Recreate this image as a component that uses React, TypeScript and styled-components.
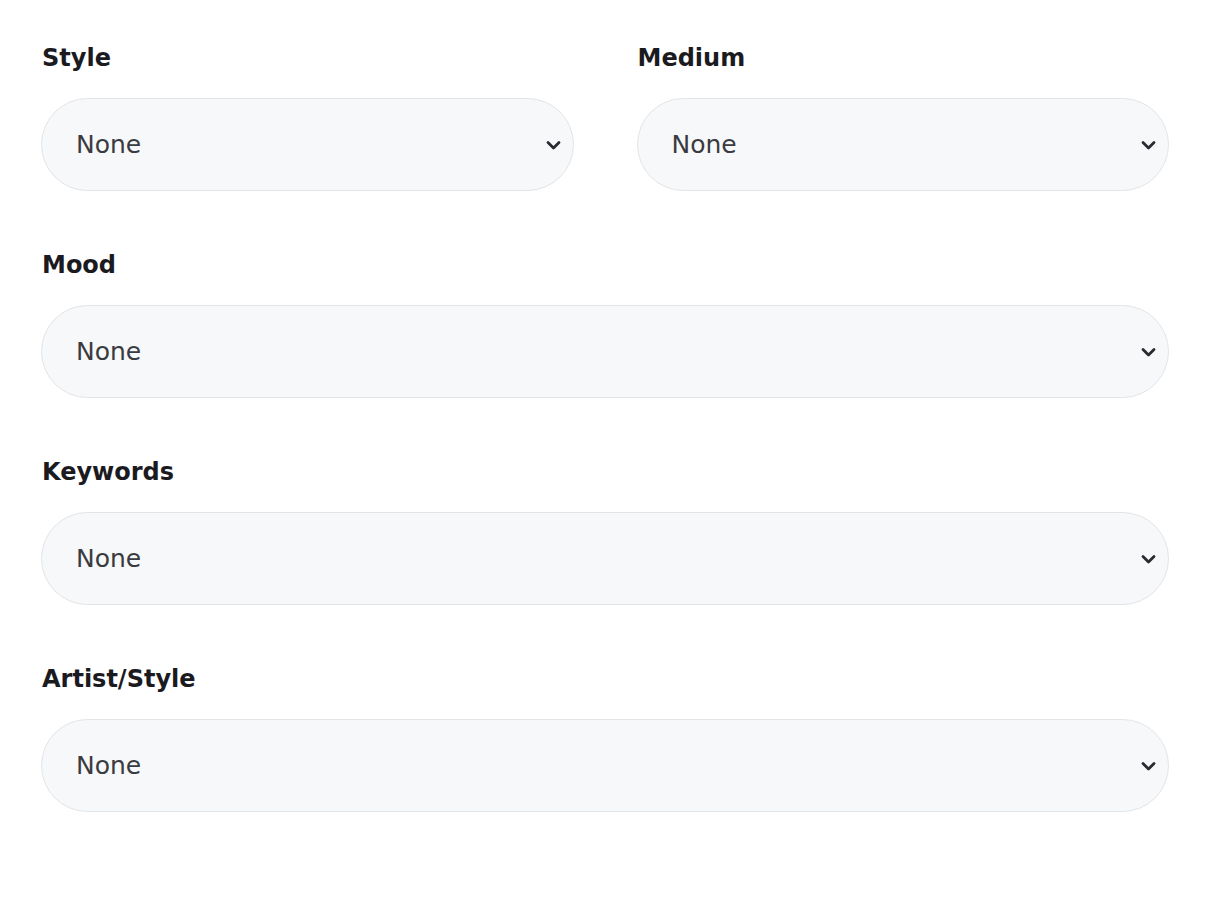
import { createGlobalStyle, styled } from "styled-components";

const GlobalStyle = createGlobalStyle`
  html, body {
    margin: 0;
    padding: 0;
    background: #ffffff;
  }
  body {
    font-family: "DejaVu Sans", "Liberation Sans", sans-serif;
  }
`;

const Form = styled.form`
  box-sizing: border-box;
  width: 1128px;
  margin-left: 41px;
  padding-top: 43px;
  display: flex;
  flex-direction: column;
  gap: 59px;
`;

const Row = styled.div`
  display: grid;
  grid-template-columns: 1fr 1fr;
  column-gap: 63px;
`;

const Field = styled.div`
  display: flex;
  flex-direction: column;
`;

const Label = styled.label`
  font-size: 24px;
  line-height: 30px;
  font-weight: bold;
  color: #1b1b1f;
  margin-bottom: 25px;
  padding-left: 1px;
`;

const SelectWrap = styled.div`
  position: relative;
`;

const Select = styled.select`
  appearance: none;
  -webkit-appearance: none;
  box-sizing: border-box;
  width: 100%;
  height: 93px;
  padding: 0 60px 0 34px;
  border: 1.5px solid #e2e4e7;
  border-radius: 47px;
  background: #f7f8fa;
  font-family: "DejaVu Sans", "Liberation Sans", sans-serif;
  font-size: 25px;
  color: #3a3b40;
  outline: none;
`;

const Chevron = styled.svg`
  position: absolute;
  right: 13px;
  top: 50%;
  width: 15px;
  height: 10px;
  transform: translateY(-45%);
  pointer-events: none;
`;

function Dropdown({ id }: { id: string }) {
  return (
    <SelectWrap>
      <Select id={id} defaultValue="none">
        <option value="none">None</option>
      </Select>
      <Chevron viewBox="0 0 15 10">
        <path d="M2 2 L7.5 7.5 L13 2" fill="none" stroke="#2a2b30" strokeWidth="2.8" strokeLinecap="round" strokeLinejoin="round" />
      </Chevron>
    </SelectWrap>
  );
}

function SelectField({ id, label }: { id: string; label: string }) {
  return (
    <Field>
      <Label htmlFor={id}>{label}</Label>
      <Dropdown id={id} />
    </Field>
  );
}

export default function App() {
  return (
    <>
      <GlobalStyle />
      <Form>
        <Row>
          <SelectField id="style" label="Style" />
          <SelectField id="medium" label="Medium" />
        </Row>
        <SelectField id="mood" label="Mood" />
        <SelectField id="keywords" label="Keywords" />
        <SelectField id="artist" label="Artist/Style" />
      </Form>
    </>
  );
}
